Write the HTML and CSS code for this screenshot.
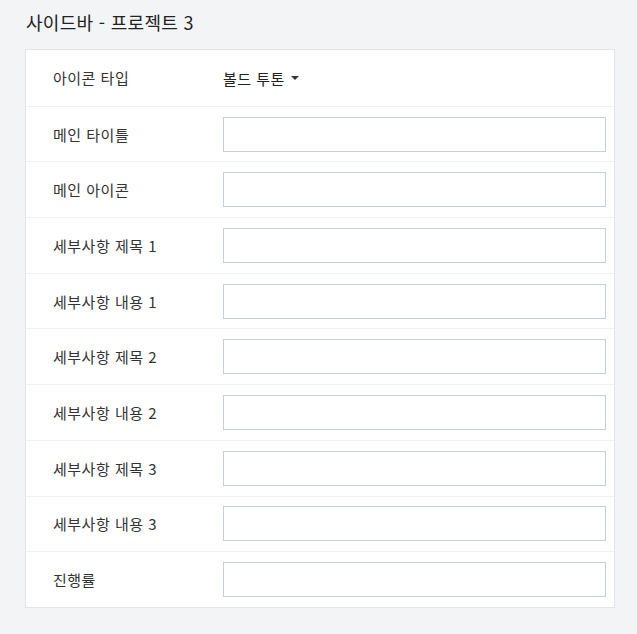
FILE: index.html
```html
<!DOCTYPE html>
<html lang="ko">
<head>
<meta charset="utf-8">
<link rel="stylesheet" href="styles.css">
</head>
<body>
<div class="page">
  <h1 class="title">사이드바 - 프로젝트 3</h1>
  <div class="card">
    <div class="row">
      <div class="label">아이콘 타입</div>
      <div class="field"><span class="dropdown">볼드 투톤 <span class="caret"></span></span></div>
    </div>
    <div class="row"><div class="label">메인 타이틀</div><div class="field"><input class="input" type="text"></div></div>
    <div class="row"><div class="label">메인 아이콘</div><div class="field"><input class="input" type="text"></div></div>
    <div class="row"><div class="label">세부사항 제목 1</div><div class="field"><input class="input" type="text"></div></div>
    <div class="row"><div class="label">세부사항 내용 1</div><div class="field"><input class="input" type="text"></div></div>
    <div class="row"><div class="label">세부사항 제목 2</div><div class="field"><input class="input" type="text"></div></div>
    <div class="row"><div class="label">세부사항 내용 2</div><div class="field"><input class="input" type="text"></div></div>
    <div class="row"><div class="label">세부사항 제목 3</div><div class="field"><input class="input" type="text"></div></div>
    <div class="row"><div class="label">세부사항 내용 3</div><div class="field"><input class="input" type="text"></div></div>
    <div class="row"><div class="label">진행률</div><div class="field"><input class="input" type="text"></div></div>
  </div>
</div>
</body>
</html>
```
FILE: styles.css
```css
html, body {
  margin: 0;
  padding: 0;
  background: #f3f4f6;
}
body {
  font-family: "Noto Sans CJK KR", "Noto Sans", sans-serif;
  color: #333;
}
.page {
  padding: 10px 22px 0 25px;
}
.title {
  margin: 0 0 14px 1px;
  font-size: 18px;
  font-weight: 400;
  line-height: 25px;
  letter-spacing: 0.3px;
  color: #222;
}
.card {
  background: #fff;
  border: 1px solid #e1e4e8;
  width: 588px;
}
.row {
  display: flex;
  align-items: center;
  height: 55.7px;
  box-sizing: border-box;
  border-top: 1px solid #eef0f2;
}
.row:first-child {
  border-top: none;
}
.label {
  width: 170px;
  padding-left: 27px;
  font-size: 15px;
  letter-spacing: 0.5px;
  color: #333;
}
.field {
  flex: 1;
  padding-right: 8px;
}
.dropdown {
  font-size: 15px;
  letter-spacing: 0.5px;
  color: #222;
  display: inline-flex;
  align-items: center;
  gap: 6px;
}
.caret {
  width: 0;
  height: 0;
  border-left: 4px solid transparent;
  border-right: 4px solid transparent;
  border-top: 4px solid #333;
}
.input {
  display: block;
  width: 100%;
  box-sizing: border-box;
  height: 35px;
  border: 1px solid #c7ced7;
  border-radius: 0;
  background: #fff;
  margin: 0;
  padding: 0 8px;
}
```
